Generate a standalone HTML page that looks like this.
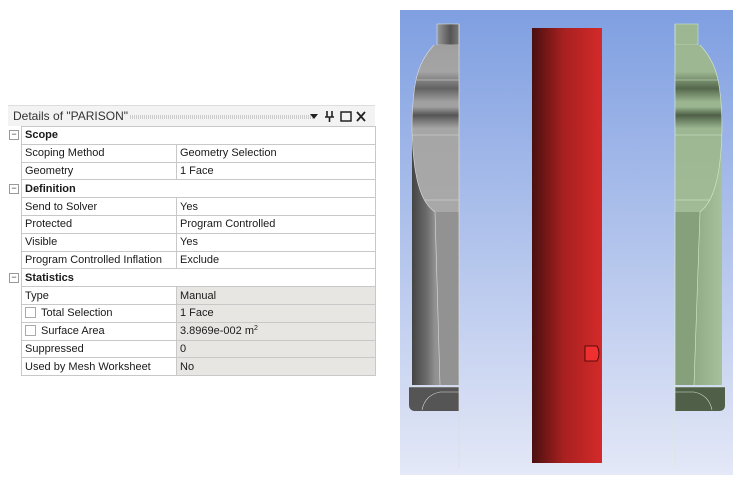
<!DOCTYPE html>
<html><head><meta charset="utf-8"><style>
body{margin:0;width:746px;height:488px;background:#fff;position:relative;overflow:hidden;font-family:"Segoe UI","Liberation Sans",sans-serif;font-size:11px;color:#1a1a1a}
.hdr{position:absolute;left:8px;top:105px;width:367px;height:20px;background:#f3f3f3;border-top:1px solid #ddd}
.hdr span.t{position:absolute;left:5px;top:3px;color:#333;font-size:12px}
.dots{position:absolute;left:122px;top:9px;width:184px;height:4px;background:repeating-linear-gradient(90deg,#ccc 0 1px,transparent 1px 2px)}
table{position:absolute;left:21px;top:126px;border-collapse:collapse;width:354px;table-layout:fixed}
tr{height:17.8px}
td{border:1px solid #c8c8c8;height:17.8px;padding:1px 0 0 3px;box-sizing:border-box;white-space:nowrap;line-height:15px;overflow:hidden}
.g td.v{background:#e7e6e3}
.cat td{font-weight:bold}
.box{display:inline-block;box-sizing:border-box;width:11px;height:11px;border:1px solid #aaa;background:#fff;vertical-align:-2px;margin-right:5px}
.minus{position:absolute;left:9px;width:8px;height:8px;border:1px solid #999;background:#fff;font-size:9px;line-height:7px;text-align:center;color:#333}
</style></head><body>
<div class="hdr"><span class="t">Details of "PARISON"</span><div class="dots"></div>
<svg style="position:absolute;left:300px;top:4px" width="64" height="13">
<path d="M2,4 H10 L6,9 Z" fill="#222"/>
<path d="M19,1 V7 M24,1 V7 M17,7 H26 M21.5,7 V12" stroke="#222" stroke-width="1.6" fill="none"/>
<rect x="33" y="2" width="10" height="9" fill="none" stroke="#222" stroke-width="1.5"/>
<path d="M49,2 L57,11 M57,2 L49,11" stroke="#222" stroke-width="1.8"/>
</svg></div>
<div class="minus" style="top:130px">−</div>
<div class="minus" style="top:184px">−</div>
<div class="minus" style="top:273px">−</div>
<table>
<colgroup><col style="width:155px"><col style="width:199px"></colgroup>
<tr class="cat"><td colspan="2">Scope</td></tr>
<tr><td class="k">Scoping Method</td><td class="v">Geometry Selection</td></tr>
<tr><td class="k">Geometry</td><td class="v">1 Face</td></tr>
<tr class="cat"><td colspan="2">Definition</td></tr>
<tr><td class="k">Send to Solver</td><td class="v">Yes</td></tr>
<tr><td class="k">Protected</td><td class="v">Program Controlled</td></tr>
<tr><td class="k">Visible</td><td class="v">Yes</td></tr>
<tr><td class="k">Program Controlled Inflation</td><td class="v">Exclude</td></tr>
<tr class="cat"><td colspan="2">Statistics</td></tr>
<tr class="g"><td class="k">Type</td><td class="v">Manual</td></tr>
<tr class="g"><td class="k"><span class="box"></span>Total Selection</td><td class="v">1 Face</td></tr>
<tr class="g"><td class="k"><span class="box"></span>Surface Area</td><td class="v">3.8969e-002 m<span style="font-size:7px;vertical-align:4px;line-height:0">2</span></td></tr>
<tr class="g"><td class="k">Suppressed</td><td class="v">0</td></tr>
<tr class="g"><td class="k">Used by Mesh Worksheet</td><td class="v">No</td></tr>
</table>
<svg style="position:absolute;left:0;top:0" width="746" height="488">
<defs>
<linearGradient id="bg" x1="0" y1="0" x2="0" y2="1"><stop offset="0" stop-color="#7f9fe1"/><stop offset="1" stop-color="#e4e8f7"/></linearGradient>
<linearGradient id="cy" x1="0" y1="0" x2="1" y2="0"><stop offset="0" stop-color="#4a1010"/><stop offset="0.45" stop-color="#a82020"/><stop offset="1" stop-color="#d42a2a"/></linearGradient>
<linearGradient id="gl" x1="0" y1="0" x2="1" y2="0"><stop offset="0" stop-color="#444"/><stop offset="0.3" stop-color="#6a6a6a"/><stop offset="0.5" stop-color="#929292"/><stop offset="1" stop-color="#9a9a9a"/></linearGradient>
<linearGradient id="gu" x1="0" y1="0" x2="0" y2="1"><stop offset="0" stop-color="#a0a0a0"/><stop offset="0.16" stop-color="#a4a4a4"/><stop offset="0.26" stop-color="#626262"/><stop offset="0.34" stop-color="#a0a0a0"/><stop offset="0.37" stop-color="#a0a0a0"/><stop offset="0.42" stop-color="#555"/><stop offset="0.5" stop-color="#a6a6a6"/><stop offset="1" stop-color="#a8a8a8"/></linearGradient>
<linearGradient id="ngl" x1="0" y1="0" x2="1" y2="0"><stop offset="0" stop-color="#999"/><stop offset="0.6" stop-color="#555"/><stop offset="1" stop-color="#777"/></linearGradient>
<linearGradient id="gr" x1="0" y1="0" x2="1" y2="0"><stop offset="0" stop-color="#85a07b"/><stop offset="0.5" stop-color="#93ae88"/><stop offset="1" stop-color="#a7c19c"/></linearGradient>
<linearGradient id="gru" x1="0" y1="0" x2="0" y2="1"><stop offset="0" stop-color="#9cb792"/><stop offset="0.16" stop-color="#9cb792"/><stop offset="0.26" stop-color="#55684c"/><stop offset="0.34" stop-color="#9ab590"/><stop offset="0.37" stop-color="#9ab590"/><stop offset="0.42" stop-color="#4e6046"/><stop offset="0.5" stop-color="#9cb792"/><stop offset="1" stop-color="#a1bb97"/></linearGradient>
</defs>
<rect x="400" y="10" width="333" height="465" fill="url(#bg)"/>
<rect x="437" y="24" width="22" height="21" fill="url(#ngl)" stroke="#ddd" stroke-width="0.6"/>
<path d="M459,45 L434,45 Q420,60 416,80 Q412,100 412,130 L412,385 L459,385 Z" fill="url(#gl)"/>
<path d="M459,45 L434,45 Q420,60 416,80 Q412,100 412,130 Q413,170 420,190 Q425,205 435,212 L459,212 Z" fill="url(#gu)"/>
<path d="M435,212 L459,212 L459,385 L440,385 Z" fill="#929292"/>
<path d="M409,387 L459,387 L459,411 L414,411 Q409,410 409,405 Z" fill="#555"/>
<path d="M434,45 Q420,60 416,80 Q412,100 412,130 Q413,170 420,190 Q425,205 435,212 L440,385 M416,80 H459 M412,135 H459 M425,200 H459 M409,387 H459 M422,410 Q425,395 440,392 H459" fill="none" stroke="#ddd" stroke-width="0.6"/>
<line x1="459" y1="24" x2="459" y2="467" stroke="#ddd" stroke-width="0.7"/>
<rect x="675" y="24" width="23" height="21" fill="#9cb792" stroke="#cfe5c4" stroke-width="0.6"/>
<path d="M675,45 L700,45 Q714,60 718,80 Q722,100 722,130 L722,385 L675,385 Z" fill="url(#gr)"/>
<path d="M675,45 L700,45 Q714,60 718,80 Q722,100 722,130 Q721,170 714,190 Q709,205 700,212 L675,212 Z" fill="url(#gru)"/>
<path d="M675,212 L700,212 L694,385 L675,385 Z" fill="#86a07c"/>
<path d="M675,387 L725,387 L725,405 Q725,411 719,411 L675,411 Z" fill="#4f5f48"/>
<path d="M700,45 Q714,60 718,80 Q722,100 722,130 Q721,170 714,190 Q709,205 700,212 L694,385 M675,80 H718 M675,135 H722 M675,200 H710 M675,387 H725 M712,410 Q709,395 694,392 H675" fill="none" stroke="#d6ebcc" stroke-width="0.6"/>
<line x1="675" y1="24" x2="675" y2="467" stroke="#d6ebcc" stroke-width="0.7"/>
<rect x="532" y="28" width="70" height="435" fill="url(#cy)"/>
<path d="M585,346 H597 Q601,353 597,361 H585 Z" fill="#f03030" stroke="#300" stroke-width="0.8"/>
</svg>
</body></html>
